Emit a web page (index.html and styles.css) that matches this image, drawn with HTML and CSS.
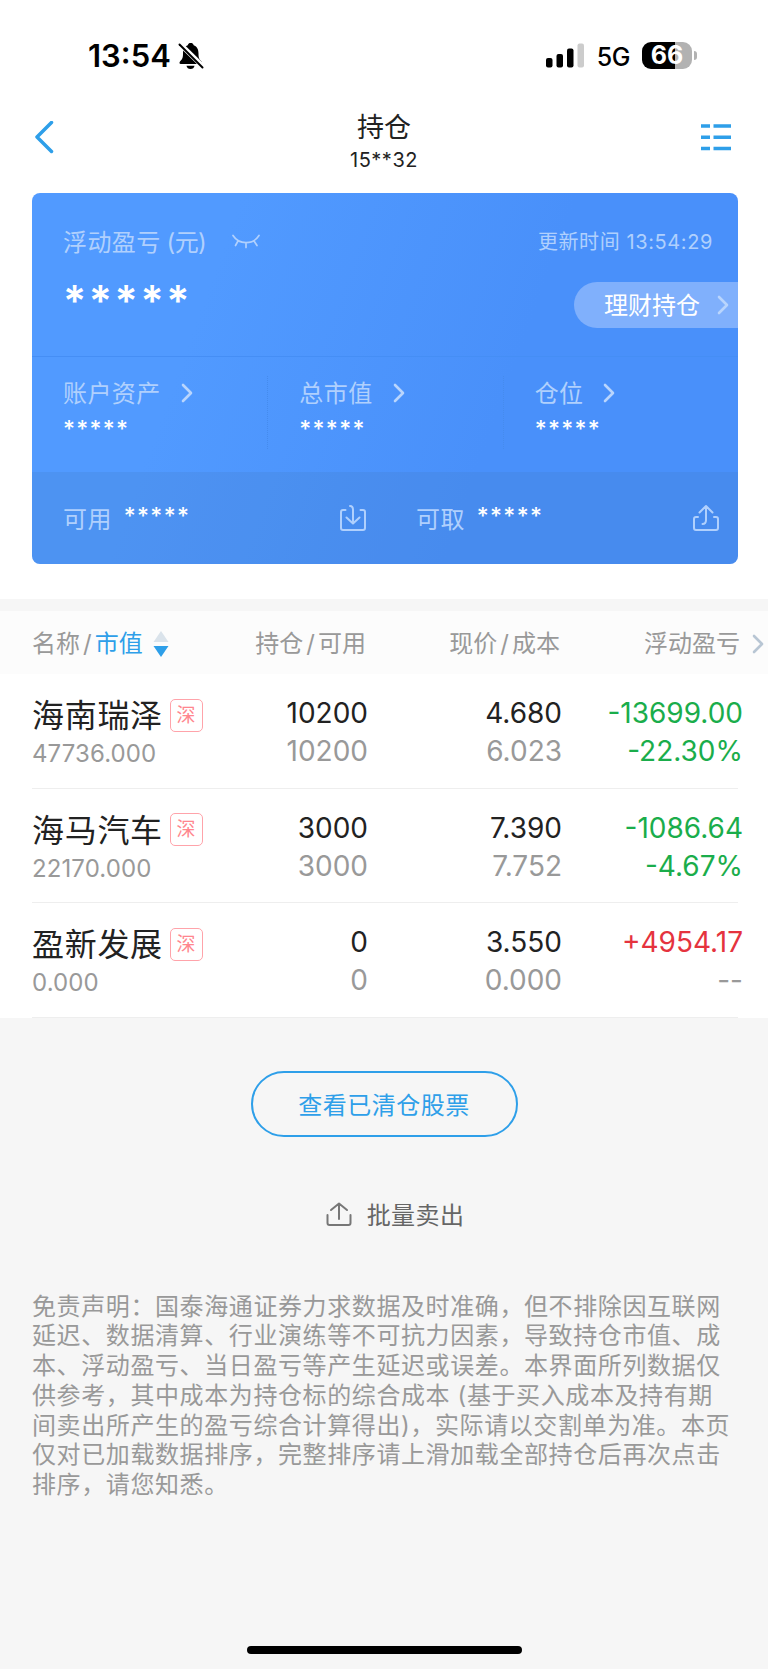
FILE: index.html
```html
<!DOCTYPE html>
<html lang="zh-CN">
<head>
    <meta charset="UTF-8">
    <meta name="viewport" content="width=device-width, initial-scale=1.0">
    <title>持仓</title>
    <link rel="stylesheet" href="styles.css">
</head>
<body>
    <div class="status-bar">
        <span class="time">13:54</span>
        <svg class="bell" width="26" height="28" viewBox="0 0 26 28">
            <path d="M2 19.500c2.500-2.500 3-4 3-8C5 6.500 7 4.300 9.700 3.200 10.200 1.500 11.200 1 12.700 1s2.500.5 3 2.200C18.500 4.300 20.500 6.500 20.500 11.500c0 4 .5 5.500 3 8 1 1.400.5 2.500-.8 2.500H2.800c-1.300 0-1.800-1.100-.8-2.500z"/>
            <path d="M8.500 23.700h8c-.3 2-1.800 3.300-4 3.300s-3.700-1.300-4-3.300z"/>
            <path d="M1 1l25 24.500" stroke="#fff" stroke-width="5"/>
            <path d="M1.500 2.500l23 23" stroke="#000" stroke-width="2" stroke-linecap="round"/>
        </svg>
        <svg class="signal" width="38" height="25" viewBox="0 0 38 25">
            <rect x="0" y="15" width="6.500" height="9.500" rx="2"/>
            <rect x="10.500" y="11" width="6.500" height="13.500" rx="2"/>
            <rect x="21" y="5.500" width="6.500" height="19" rx="2"/>
            <rect x="31.500" y="0.500" width="6.500" height="24" rx="2" fill="#ccc"/>
        </svg>
        <span class="network">5G</span>
        <span class="battery">66</span>
        <span class="battery-cap"></span>
    </div>

    <div class="nav">
        <svg width="20" height="34" viewBox="0 0 20 34" fill="none" stroke="#2e9fe9" stroke-width="3.500" stroke-linecap="round" stroke-linejoin="round">
            <path d="M17.500 1.500L3 16l14.500 14.500"/>
        </svg>
        <div class="nav-title">
            <h1>持仓</h1>
            <p>15**32</p>
        </div>
        <svg width="30" height="28" viewBox="0 0 30 28" fill="none" stroke="#2e9fe9" stroke-width="3.500">
            <path d="M0 2h9M12.500 2H30M0 13.300h9M12.500 13.300H30M0 24.500h9M12.500 24.500H30"/>
        </svg>
    </div>

    <div class="card">
        <div class="card-top">
            <div class="card-row">
                <span class="label">浮动盈亏<span class="paren">(元)</span></span>
                <svg class="eye" width="28" height="15" viewBox="0 0 28 15" fill="none" stroke="currentColor" stroke-width="1.700" stroke-linecap="round">
                    <path d="M1 1.500C7 11 21 11 27 1.500M6 7l-2.500 4.500M14 9v4.500M22 7l3 4.500"/>
                </svg>
                <span class="update">更新时间 13:54:29</span>
            </div>
            <div class="card-row">
                <span class="stars-big">*****</span>
                <a class="wealth"><span>理财持仓</span>
                    <svg class="arrow" width="12" height="20" viewBox="0 0 12 20"><path d="M2 2l8 8-8 8"/></svg>
                </a>
            </div>
        </div>
        <div class="card-middle">
            <div class="asset">
                <div class="label"><span>账户资产</span><svg class="arrow" width="12" height="20" viewBox="0 0 12 20"><path d="M2 2l8 8-8 8"/></svg></div>
                <div class="stars">*****</div>
            </div>
            <div class="asset">
                <div class="label"><span>总市值</span><svg class="arrow" width="12" height="20" viewBox="0 0 12 20"><path d="M2 2l8 8-8 8"/></svg></div>
                <div class="stars">*****</div>
            </div>
            <div class="asset">
                <div class="label"><span>仓位</span><svg class="arrow" width="12" height="20" viewBox="0 0 12 20"><path d="M2 2l8 8-8 8"/></svg></div>
                <div class="stars">*****</div>
            </div>
        </div>
        <div class="card-bottom">
            <div class="cash">
                <span class="label">可用</span>
                <span class="stars">*****</span>
                <svg width="28" height="28" viewBox="0 0 28 28">
                    <path d="M6.500 6H4Q2 6 2 8v16q0 2 2 2h20q2 0 2-2V8q0-2-2-2h-2.500M11 2q3 0 3 4v13M7.500 13.500l6.500 6 6.500-6"/>
                </svg>
            </div>
            <div class="cash">
                <span class="label">可取</span>
                <span class="stars">*****</span>
                <svg width="28" height="28" viewBox="0 0 28 28">
                    <path d="M6 13H4q-2 0-2 2v9q0 2 2 2h20q2 0 2-2v-9q0-2-2-2h-2M10.500 20q3.500 0 3.500-4V2M7.500 8.500L14 2l6.500 6.500"/>
                </svg>
            </div>
        </div>
    </div>

    <div class="table">
        <div class="table-head">
            <div>名称<i>/</i><b>市值</b>
                <svg width="16" height="26" viewBox="0 0 16 26">
                    <path d="M8 0l7.500 11H.5z" fill="#dae3eb"/>
                    <path d="M8 26l7.500-11H.5z" fill="#2e9fe9"/>
                </svg>
            </div>
            <div>持仓<i>/</i>可用</div>
            <div>现价<i>/</i>成本</div>
            <div>浮动盈亏<svg class="arrow" width="12" height="20" viewBox="0 0 12 20"><path d="M2 2l8 8-8 8"/></svg></div>
        </div>
        <div class="row">
            <div class="stock">
                <div class="name">海南瑞泽<span class="tag">深</span></div>
                <div class="value">47736.000</div>
            </div>
            <div class="num">10200<span>10200</span></div>
            <div class="num">4.680<span>6.023</span></div>
            <div class="num down">-13699.00<span>-22.30%</span></div>
        </div>
        <div class="row">
            <div class="stock">
                <div class="name">海马汽车<span class="tag">深</span></div>
                <div class="value">22170.000</div>
            </div>
            <div class="num">3000<span>3000</span></div>
            <div class="num">7.390<span>7.752</span></div>
            <div class="num down">-1086.64<span>-4.67%</span></div>
        </div>
        <div class="row">
            <div class="stock">
                <div class="name">盈新发展<span class="tag">深</span></div>
                <div class="value">0.000</div>
            </div>
            <div class="num">0<span>0</span></div>
            <div class="num">3.550<span>0.000</span></div>
            <div class="num up">+4954.17<span>--</span></div>
        </div>
    </div>

    <div class="footer">
        <button class="cleared">查看已清仓股票</button>
        <div class="batch">
            <svg width="26" height="25" viewBox="0 0 26 25">
                <path d="M1.500 13v8q0 2 2 2h19q2 0 2-2v-8M13 17V2M5 8l8-6.500L21 8"/>
            </svg>
            <span>批量卖出</span>
        </div>
        <p class="disclaimer">
            免责声明：国泰海通证券力求数据及时准确，但不排除因互联网<br>
            延迟、数据清算、行业演练等不可抗力因素，导致持仓市值、成<br>
            本、浮动盈亏、当日盈亏等产生延迟或误差。本界面所列数据仅<br>
            供参考，其中成本为持仓标的综合成本 (基于买入成本及持有期<br>
            间卖出所产生的盈亏综合计算得出)，实际请以交割单为准。本页<br>
            仅对已加载数据排序，完整排序请上滑加载全部持仓后再次点击<br>
            排序，请您知悉。
        </p>
        <div class="home-bar"></div>
    </div>
</body>
</html>
```
FILE: styles.css
```css
* {
    box-sizing: border-box;
}
body {
    margin: 0;
    height: 1669px;
    display: flex;
    flex-direction: column;
    font-family: Inter, 'Noto Sans CJK SC', sans-serif;
    font-size: 24px;
    background-color: #fff;
    color: #222;
}
svg {
    flex: none;
}
.status-bar {
    height: 110px;
    padding: 1px 71px 0 88px;
    display: flex;
    align-items: center;
    color: #000;
}
.time {
    width: 90px;
    font-size: 31px;
    font-weight: 600;
    line-height: 38px;
    padding-top: 1px;
}
.signal {
    margin-left: auto;
}
.network {
    margin: 2px 12px 0 13px;
    font-size: 25px;
    font-weight: 500;
    letter-spacing: -0.5px;
}
.battery {
    width: 50px;
    height: 27px;
    line-height: 27px;
    border-radius: 9px;
    background: linear-gradient(to right, #000 66%, #b2b2b2 66%);
    color: #fff;
    font-size: 25px;
    font-weight: 700;
    text-align: center;
}
.battery-cap {
    width: 3px;
    height: 9px;
    margin-left: 2px;
    border-radius: 0 3px 3px 0;
    background-color: #b2b2b2;
}
.nav {
    height: 83px;
    padding: 0 37px 28px 34px;
    display: grid;
    grid-template-columns: 30px 1fr 30px;
    align-items: center;
}
.nav-title {
    height: 54px;
    padding-left: 3px;
    text-align: center;
}
.nav h1 {
    margin: 0;
    font-size: 27px;
    font-weight: 400;
    line-height: 34px;
}
.nav p {
    margin: 0;
    font-size: 20px;
    line-height: 30px;
    letter-spacing: 0.5px;
}
.card {
    height: 371px;
    margin: 0 30px 35px 32px;
    border-radius: 8px;
    overflow: hidden;
    background: linear-gradient(110deg, #519aff 25%, #4990fa 65%);
    color: #fff;
}
.card-top {
    height: 164px;
    padding-top: 27px;
    border-bottom: 1px solid #458ef5;
}
.card-row {
    display: flex;
    align-items: center;
    height: 40px;
    padding-left: 31px;
}
.label {
    color: #b0d0fd;
    letter-spacing: 0.4px;
}
.paren {
    margin-left: 6px;
    letter-spacing: -0.7px;
}
.eye {
    margin: 3px 0 0 26px;
    color: #b0d0fd;
}
.update {
    margin: 0 25px 0 auto;
    font-size: 20px;
    letter-spacing: 0.6px;
    color: #b0d0fd;
}
.stars-big {
    font-size: 43px;
    font-weight: 600;
    letter-spacing: 2.6px;
    line-height: 40px;
    padding-top: 39px;
}
.wealth {
    display: flex;
    align-items: center;
    justify-content: space-between;
    width: 164px;
    height: 46px;
    margin: 49px 0 0 auto;
    padding: 0 9px 0 30px;
    border-radius: 23px 0 0 23px;
    background-color: #80b0fc;
}
.wealth span {
    margin-top: -2px;
}
.arrow {
    fill: none;
    stroke: #b9d5fd;
    stroke-width: 2.6;
    stroke-linecap: round;
    stroke-linejoin: round;
}
.card-middle {
    height: 115px;
    padding: 19px 0 23px;
    display: grid;
    grid-template-columns: repeat(3, 1fr);
}
.asset {
    padding-left: 31px;
}
.asset + .asset {
    border-left: 1px dotted #458bed;
}
.asset .label {
    display: flex;
    align-items: center;
    height: 34px;
}
.asset .label span {
    margin-top: -4px;
}
.asset .arrow {
    margin-left: 20px;
}
.stars {
    font-size: 23px;
    font-weight: 500;
    letter-spacing: 1.3px;
    line-height: 38px;
}
.card-bottom {
    height: 92px;
    display: grid;
    grid-template-columns: 1fr 1fr;
    background-color: rgba(65, 120, 190, 0.2);
}
.cash {
    display: flex;
    align-items: center;
    padding: 0 18px 0 31px;
}
.cash .label {
    margin-top: -2px;
}
.cash .stars {
    margin: -4px 0 0 12px;
}
.cash svg {
    margin-left: auto;
    fill: none;
    stroke: #b0d0fd;
    stroke-width: 2;
    stroke-linecap: round;
    stroke-linejoin: round;
}
.table {
    border-top: 12px solid #f6f6f6;
}
.table-head, .row {
    display: grid;
    grid-template-columns: 216px 120px 194px 1fr;
    padding-left: 32px;
}
.table-head {
    height: 63px;
    line-height: 64px;
    background-color: #fcfcfc;
    color: #999;
}
.table-head > div {
    display: flex;
    align-items: center;
    justify-content: flex-end;
    padding: 1px 2px 0 0;
}
.table-head > div:first-child {
    justify-content: flex-start;
}
.table-head > div:last-child {
    padding-right: 0;
}
.table-head i {
    margin: 0 3px;
    font-style: normal;
}
.table-head b {
    margin-right: 10px;
    font-weight: 400;
    color: #2e9fe9;
}
.table-head .arrow {
    margin: 0 4px 0 12px;
    stroke: #b8c6d4;
}
.row {
    position: relative;
    height: 114.5px;
    padding-top: 20px;
}
.row::after {
    content: '';
    position: absolute;
    left: 32px;
    right: 30px;
    bottom: 0;
    border-bottom: 1px solid #eee;
}
.name {
    display: flex;
    align-items: center;
    height: 38px;
    font-size: 32px;
    letter-spacing: 0.7px;
    white-space: nowrap;
}
.tag {
    width: 33px;
    height: 33px;
    margin: 4px 0 0 7px;
    border: 1px solid #ffa3aa;
    border-radius: 5px;
    font-size: 19px;
    line-height: 31px;
    text-align: center;
    color: #ff868e;
}
.value {
    margin-top: 6px;
    line-height: 32px;
    letter-spacing: 0.1px;
    color: #999;
}
.num {
    font-size: 28px;
    line-height: 38px;
    text-align: right;
}
.num span {
    display: block;
    color: #999;
}
.num:last-child {
    padding-right: 25px;
}
.down, .num.down span {
    color: #1aad4b;
}
.up {
    color: #e5333e;
}
.footer {
    flex: 1;
    display: flex;
    flex-direction: column;
    align-items: center;
    padding-top: 53px;
    background-color: #f6f6f6;
}
.cleared {
    width: 267px;
    height: 66px;
    border: 2px solid #2e9fe9;
    border-radius: 33px;
    background: none;
    font: inherit;
    letter-spacing: 0.5px;
    color: #2e9fe9;
}
.batch {
    display: flex;
    align-items: center;
    gap: 15px;
    height: 36px;
    margin: 60px 0 59px 22px;
    letter-spacing: 0.4px;
    color: #666;
}
.batch span {
    margin-top: -2px;
}
.batch svg {
    fill: none;
    stroke: #777;
    stroke-width: 2;
    stroke-linecap: round;
    stroke-linejoin: round;
}
.disclaimer {
    width: 736px;
    margin: 0 0 0 32px;
    line-height: 29.8px;
    letter-spacing: 0.6px;
    white-space: nowrap;
    color: #999;
}
.home-bar {
    width: 275px;
    height: 8px;
    margin: auto 0 15px;
    border-radius: 4px;
    background-color: #000;
}
```
